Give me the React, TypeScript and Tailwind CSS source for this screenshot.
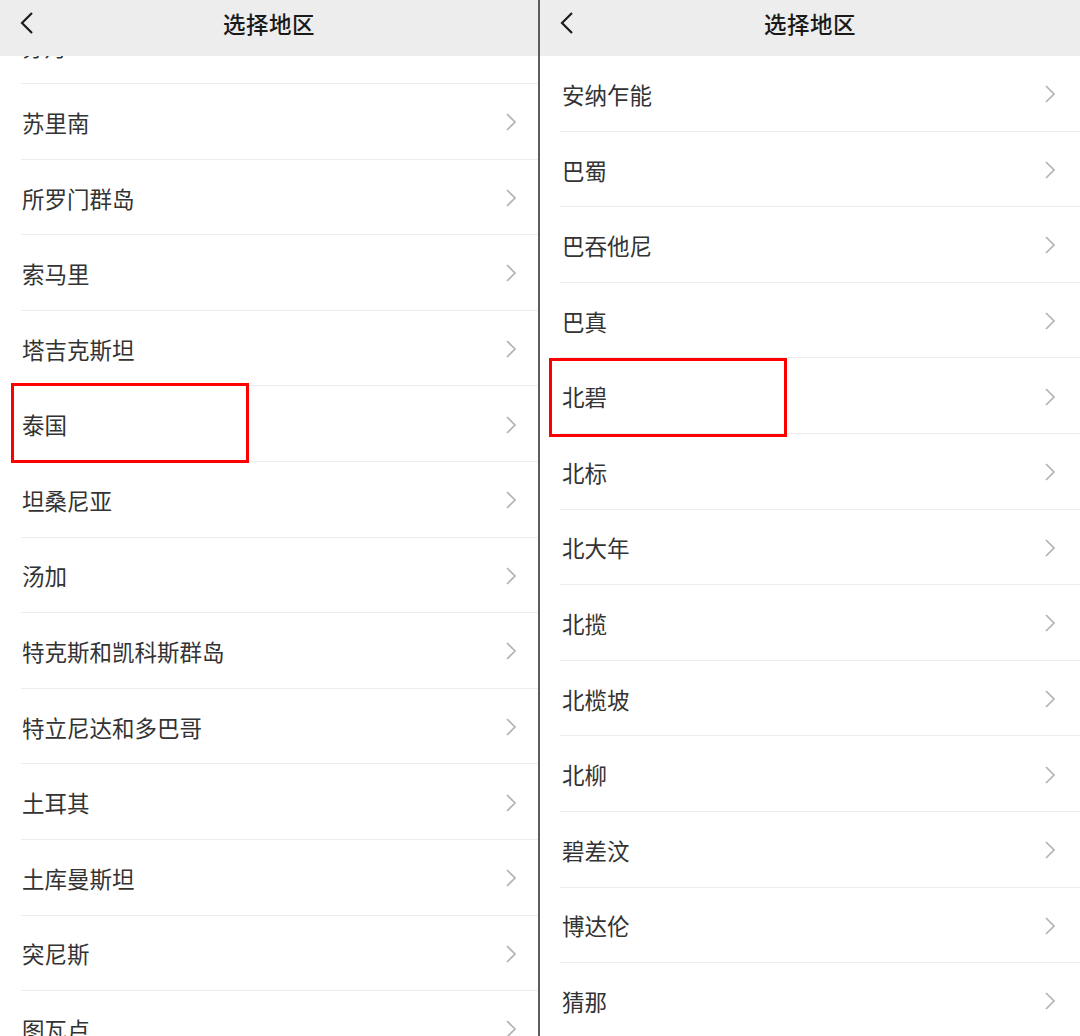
import React from "react";

const leftItems = [
    "苏丹",
    "苏里南",
    "所罗门群岛",
    "索马里",
    "塔吉克斯坦",
    "泰国",
    "坦桑尼亚",
    "汤加",
    "特克斯和凯科斯群岛",
    "特立尼达和多巴哥",
    "土耳其",
    "土库曼斯坦",
    "突尼斯",
    "图瓦卢",
];

const rightItems = [
    "安纳乍能",
    "巴蜀",
    "巴吞他尼",
    "巴真",
    "北碧",
    "北标",
    "北大年",
    "北揽",
    "北榄坡",
    "北柳",
    "碧差汶",
    "博达伦",
    "猜那",
];

function Chevron() {
    return (
        <svg width="12" height="20" viewBox="0 0 12 20" fill="none" className="mt-[2px]">
            <path d="M2 2 L10 10 L2 18" stroke="#b3b3b3" strokeWidth="1.7" />
        </svg>
    );
}

function Header() {
    return (
        <div className="relative h-[56px] shrink-0 bg-[#ededed] flex items-center justify-center pb-[9px] z-10">
            <svg className="absolute left-[19px] top-[11px]" width="16" height="24" viewBox="0 0 16 24" fill="none">
                <path d="M13 2 L3 12 L13 22" stroke="#1c1c1c" strokeWidth="2.2" />
            </svg>
            <span className="text-[22.5px] font-medium text-[#1a1a1a] tracking-[0.5px]">选择地区</span>
        </div>
    );
}

function Row({ name, marked, side }: { name: string; marked: boolean; side: "left" | "right" }) {
    return (
        <div className="relative h-[75.6px] shrink-0">
            <div
                className={
                    side === "left"
                        ? "h-full ml-[21px] pl-[1px] pr-[21px] border-b border-[#ededed] flex items-center justify-between"
                        : "h-full ml-[20px] pl-[2px] pr-[24px] border-b border-[#ededed] flex items-center justify-between"
                }
            >
                <span className="text-[22.5px] text-[#333333] mt-[3px]">{name}</span>
                <Chevron />
            </div>
            {marked && side === "left" && (
                <div className="absolute left-[11px] top-[-3px] w-[238px] h-[80px] border-[3px] border-[#ff0000]" />
            )}
            {marked && side === "right" && (
                <div className="absolute left-[9px] top-[0px] w-[238px] h-[79px] border-[3px] border-[#ff0000]" />
            )}
        </div>
    );
}

export default function App() {
    return (
        <div
            className="w-[1080px] h-[1036px] overflow-hidden flex bg-white"
            style={{ fontFamily: '"Noto Sans CJK SC", "Noto Sans", sans-serif' }}
        >
            <div className="w-[538px] h-full flex flex-col overflow-hidden">
                <Header />
                <div className="flex flex-col -mt-[47.6px]">
                    {leftItems.map((n) => (
                        <Row key={n} name={n} marked={n === "泰国"} side="left" />
                    ))}
                </div>
            </div>
            <div className="w-[2px] h-full bg-[#5c5c5c]" />
            <div className="flex-1 h-full flex flex-col overflow-hidden">
                <Header />
                <div className="flex flex-col">
                    {rightItems.map((n) => (
                        <Row key={n} name={n} marked={n === "北碧"} side="right" />
                    ))}
                </div>
            </div>
        </div>
    );
}
